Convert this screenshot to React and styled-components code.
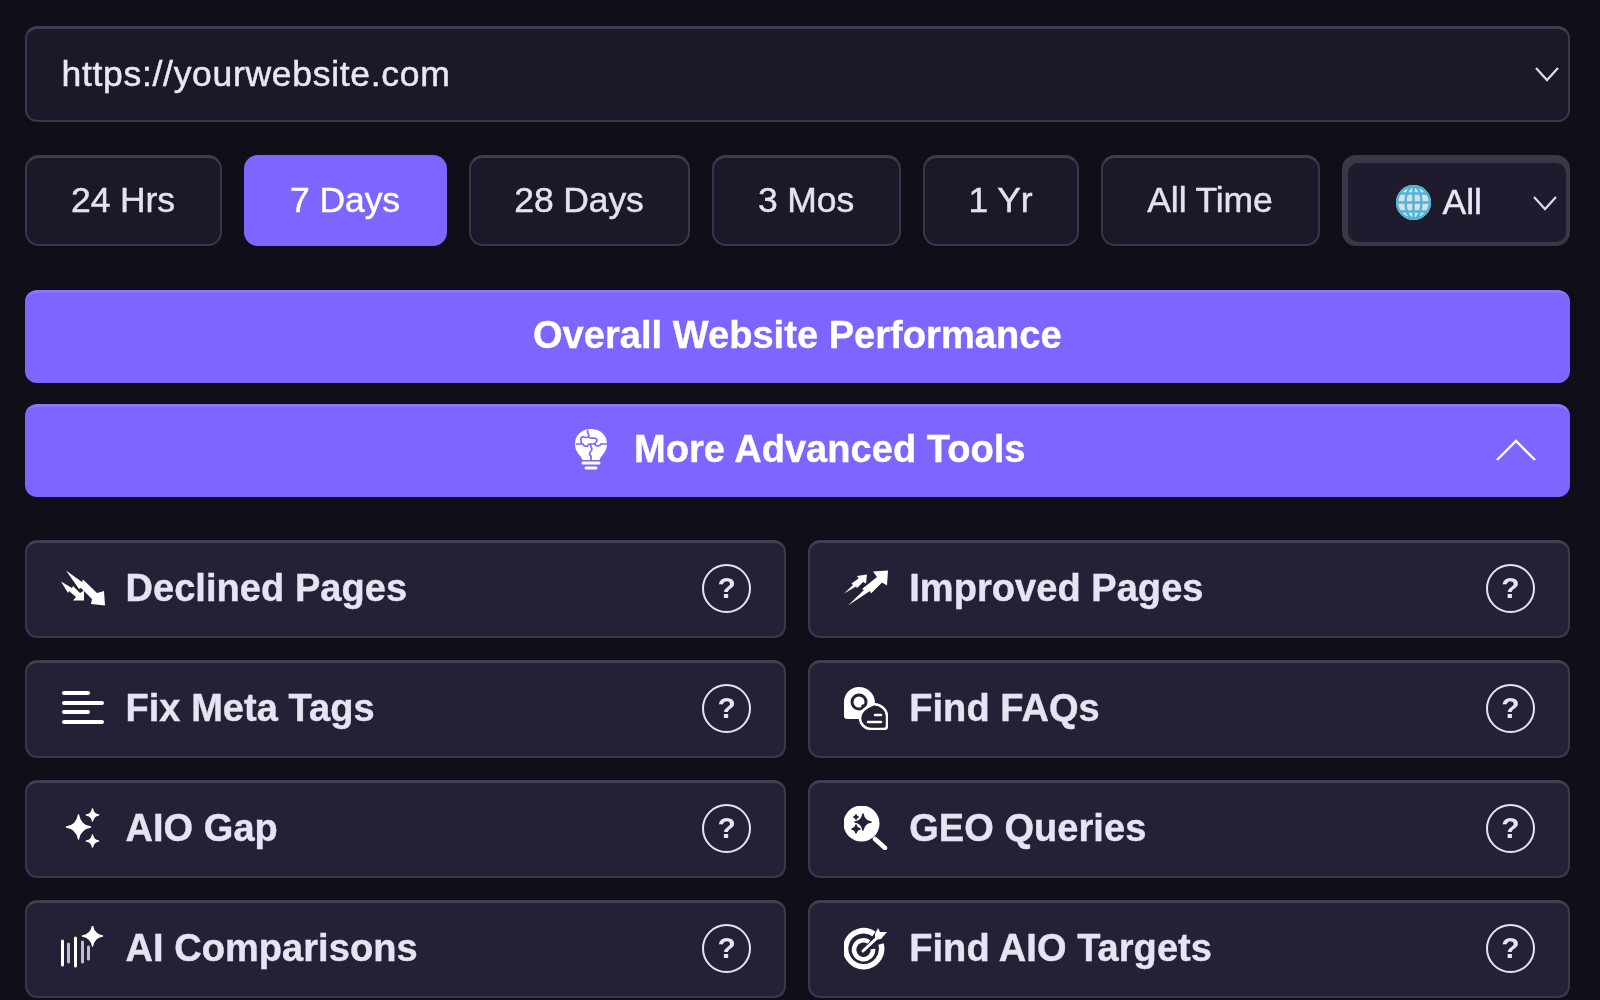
import React from "react";
import styled, { createGlobalStyle } from "styled-components";

const Global = createGlobalStyle`
  html, body { margin: 0; padding: 0; background: #100f19; }
  body { font-family: "Liberation Sans", Arial, sans-serif; overflow: hidden; }
  * { box-sizing: border-box; }
`;

const Page = styled.div`
  width: 1600px;
  height: 1000px;
  overflow: hidden;
  padding: 26px 30px 0 24.5px;
  display: flex;
  flex-direction: column;
  background: #100f19;
  filter: blur(0.45px);
`;

const UrlSelect = styled.div`
  height: 96px;
  display: flex;
  align-items: center;
  justify-content: space-between;
  padding: 0 8px 1px 35px;
  background: #1a1929;
  border: 2px solid #383746;
  border-top: 3px solid #3e3c4d;
  border-radius: 12px;
  color: #e9e7f2;
  font-size: 35.5px;
  letter-spacing: 0.7px;
  -webkit-text-stroke: 0.5px #e9e7f2;
`;

const RangeRow = styled.div`
  display: flex;
  gap: 22px;
  margin-top: 33px;
`;

const RangeButton = styled.div`
  width: ${(p) => p.$w}px;
  height: 91px;
  display: flex;
  align-items: center;
  justify-content: center;
  padding-bottom: ${(p) => (p.$active ? "1px" : "2px")};
  border-radius: 14px;
  font-size: 35.5px;
  letter-spacing: -0.1px;
  -webkit-text-stroke: 0.45px currentColor;
  color: ${(p) => (p.$active ? "#ffffff" : "#e4e2ee")};
  background: ${(p) => (p.$active ? "#7c66ff" : "#1a1929")};
  border: ${(p) => (p.$active ? "0" : "2px solid #383746")};
  border-top: ${(p) => (p.$active ? "0" : "3px solid #3e3c4d")};
`;

const RegionFrame = styled.div`
  flex: 1;
  height: 91px;
  padding: 8px 4px 4px 6px;
  background: #393847;
  border-radius: 14px;
`;

const RegionSelect = styled.div`
  height: 100%;
  display: flex;
  align-items: center;
  padding: 0 8px 0 48px;
  background: #1d1b2d;
  border-radius: 10px;
  color: #e9e7f2;
  font-size: 35.5px;
  -webkit-text-stroke: 0.45px #e9e7f2;
  gap: 12px;
`;

const RegionChevron = styled.svg`
  margin-left: auto;
  width: 26px;
  height: 16px;
  flex: none;
`;

const Bar = styled.div`
  position: relative;
  height: 93px;
  margin-top: ${(p) => p.$top}px;
  display: flex;
  align-items: center;
  justify-content: center;
  gap: 27px;
  padding: 0 0 5px ${(p) => p.$inset || 0}px;
  background: #7c66ff;
  border-radius: 12px;
  border-top: 3px solid #8a76ff;
  color: #ffffff;
  font-size: 38px;
  letter-spacing: 0.05px;
  font-weight: 700;
  -webkit-text-stroke: 0.4px #ffffff;
`;

const BarChevron = styled.svg`
  position: absolute;
  right: 34px;
  top: 32px;
  width: 40px;
  height: 22px;
`;

const ToolGrid = styled.div`
  display: grid;
  grid-template-columns: 1fr 1fr;
  column-gap: 22px;
  row-gap: 22px;
  margin-top: 43px;
`;

const ToolCard = styled.div`
  height: 98px;
  display: flex;
  align-items: center;
  padding: 0 33px 3px 34px;
  background: #232136;
  border: 2px solid #3a3849;
  border-top: 3px solid #413f51;
  border-radius: 12px;
  color: #e6e4f2;
  font-size: 38px;
  letter-spacing: 0.05px;
  font-weight: 700;
`;

const ToolIcon = styled.svg`
  width: 44px;
  height: 44px;
  flex: none;
  margin-right: 21px;
`;

const ToolLabel = styled.span`
  flex: 1;
  -webkit-text-stroke: 0.4px #e6e4f2;
`;

const Help = styled.span`
  width: 49px;
  height: 49px;
  flex: none;
  display: flex;
  align-items: center;
  justify-content: center;
  border: 2.5px solid #e6e4f2;
  border-radius: 50%;
  font-size: 30px;
  letter-spacing: 0;
  font-weight: 700;
`;

const Chevron = () => (
  <svg width="26" height="16" viewBox="0 0 26 16" fill="none">
    <path d="M2 2l11 12L24 2" stroke="#dddbe8" strokeWidth="2.2" />
  </svg>
);

const W = "#fff";
const Declined = () => (
  <ToolIcon viewBox="0 0 44 44">
    <path d="M5 4.5L21 16l1-2.5L36 27l7-2 1 14.5L30 38l1-5L20 22l-2 1z" fill={W} />
    <path d="M0 15.5L11 22l1-2 7 7 4-2.5 0 10-11 0 3-3.5-7-6-1 2z" fill={W} />
  </ToolIcon>
);
const Improved = () => (
  <ToolIcon viewBox="0 0 44 44">
    <path d="M4 39.5L20 24l-2-1 15-12-4-5.5L44 4.5 43 19.5l-5-3-11 11-1-2.5z" fill={W} />
    <path d="M0 27.5L9 19l-1.5-1.5 7-5-1.5-2.5 10-1.5-1 9-3-1.5-6 6-1-1.5z" fill={W} />
  </ToolIcon>
);
const Meta = () => (
  <ToolIcon viewBox="0 0 44 44" fill="none" stroke={W} strokeWidth="4" strokeLinecap="round">
    <path d="M3 7h24M3 17h38M3 26h24M3 36h38" />
  </ToolIcon>
);
const Faq = () => (
  <ToolIcon viewBox="0 0 44 44">
    <path d="M15 1C6 1 0 8 0 16v14c0 2 1 3 3 3h12c9 0 16-8 16-16C31 8 24 1 15 1z" fill={W} />
    <circle cx="15" cy="16" r="7" fill="none" stroke="#232136" strokeWidth="3" />
    <path d="M18 19l5 5" stroke="#232136" strokeWidth="3" />
    <path d="M30 18c-8 3-14 7-14 14 0 6 5 11 11 11h13c2 0 3-1 3-3v-10c0-6-5-11-13-12z" fill="#232136" stroke={W} strokeWidth="2.5" />
    <path d="M24 36h13M31 29h6" stroke={W} strokeWidth="2.5" strokeLinecap="round" />
  </ToolIcon>
);
const Spark = ({ x, y, r, c = W }) => (
  <path
    d={`M${x} ${y - r}Q${x + r * 0.14} ${y - r * 0.14} ${x + r} ${y}Q${x + r * 0.14} ${y + r * 0.14} ${x} ${y + r}Q${x - r * 0.14} ${y + r * 0.14} ${x - r} ${y}Q${x - r * 0.14} ${y - r * 0.14} ${x} ${y - r}z`}
    fill={c}
    stroke={c}
    strokeWidth="1.5"
    strokeLinejoin="round"
  />
);
const Gap = () => (
  <ToolIcon viewBox="0 0 44 44">
    <Spark x={17.5} y={21} r={12} />
    <Spark x={31.5} y={9} r={6} />
    <Spark x={31.5} y={35} r={6} />
  </ToolIcon>
);
const Geo = () => (
  <ToolIcon viewBox="0 0 44 44">
    <circle cx="17.5" cy="17.5" r="18" fill={W} />
    <path d="M31 33l10 9" stroke={W} strokeWidth="4.5" strokeLinecap="round" />
    <Spark x={19} y={16} r={8} c="#232136" />
    <Spark x={12} y={23} r={4} c="#232136" />
    <Spark x={12} y={11} r={2.2} c="#232136" />
  </ToolIcon>
);
const Compare = () => (
  <ToolIcon viewBox="0 0 44 44" fill="none" strokeLinecap="round">
    <path d="M1.5 15v24M14.5 12v28" stroke={W} strokeWidth="3" />
    <path d="M7.5 18v18M21.5 16v20M27.5 21v12" stroke="#c0bece" strokeWidth="3" />
    <Spark x={31.5} y={10} r={10} />
  </ToolIcon>
);
const Target = () => (
  <ToolIcon viewBox="0 0 44 44" fill="none">
    <path d="M30 8A18 18 0 1 0 37 18" stroke={W} strokeWidth="5.5" />
    <path d="M25 16A9.5 9.5 0 1 0 29 23" stroke={W} strokeWidth="4.5" />
    <path d="M19 25L36 9" stroke={W} strokeWidth="3" strokeLinecap="round" />
    <path d="M31 8l3-6 2 4 7 0-6 7-6 1z" fill={W} />
  </ToolIcon>
);

const Bulb = () => (
  <svg width="32" height="42" viewBox="0 0 32 42" fill="none">
    <path d="M16 0C7 0 0 6 0 15c0 6 3 9 6 13 1 1 1 3 2 3h16c1 0 1-2 2-3 3-4 6-7 6-13C32 6 25 0 16 0z" fill={W} />
    <path d="M13 1c-2 3 3 5 0 7-2 2-5-2-7 1-1 2 1 4 0 6M13 8c3 3 8-1 9 3 0 2-2 2-2 4M1 15h7c1 3 5 3 6 0h6c0 2 5 3 6 0h6M16 15c-2 3 3 4 0 7-2 2-2 4 0 5v4" stroke="#7c66ff" strokeWidth="1.7" />
    <path d="M8 34h16M11 39h10" stroke={W} strokeWidth="3" strokeLinecap="round" />
  </svg>
);

const Globe = () => (
  <svg width="35" height="35" viewBox="0 0 35 35" fill="none">
    <circle cx="17.5" cy="17.5" r="17.5" fill="#d9dee3" />
    <g stroke="#4db5d6" strokeWidth="2.4">
      <circle cx="17.5" cy="17.5" r="16.3" />
      <ellipse cx="17.5" cy="17.5" rx="8" ry="16.3" />
      <path d="M17.5 1v33M1 17.5h33M4 8.5h27M4 26.5h27" />
    </g>
  </svg>
);

const ranges = [
  ["24 Hrs", 197],
  ["7 Days", 203, true],
  ["28 Days", 221],
  ["3 Mos", 189],
  ["1 Yr", 156],
  ["All Time", 219],
];

const tools = [
  ["Declined Pages", Declined],
  ["Improved Pages", Improved],
  ["Fix Meta Tags", Meta],
  ["Find FAQs", Faq],
  ["AIO Gap", Gap],
  ["GEO Queries", Geo],
  ["AI Comparisons", Compare],
  ["Find AIO Targets", Target],
];

export default function App() {
  return (
    <Page>
      <Global />
      <UrlSelect>
        <span>https://yourwebsite.com</span>
        <Chevron />
      </UrlSelect>
      <RangeRow>
        {ranges.map(([label, w, active]) => (
          <RangeButton key={label} $w={w} $active={active}>
            {label}
          </RangeButton>
        ))}
        <RegionFrame>
          <RegionSelect>
            <Globe />
            <span>All</span>
            <RegionChevron viewBox="0 0 26 16" fill="none">
              <path d="M2 2l11 12L24 2" stroke="#dddbe8" strokeWidth="2.2" />
            </RegionChevron>
          </RegionSelect>
        </RegionFrame>
      </RangeRow>
      <Bar $top={44}>Overall Website Performance</Bar>
      <Bar $top={21} $inset={6}>
        <Bulb />
        <span>More Advanced Tools</span>
        <BarChevron viewBox="0 0 40 22" fill="none">
          <path d="M1 21L20 2l19 19" stroke="#fff" strokeWidth="2.4" />
        </BarChevron>
      </Bar>
      <ToolGrid>
        {tools.map(([label, Icon]) => (
          <ToolCard key={label}>
            <Icon />
            <ToolLabel>{label}</ToolLabel>
            <Help>?</Help>
          </ToolCard>
        ))}
      </ToolGrid>
    </Page>
  );
}
